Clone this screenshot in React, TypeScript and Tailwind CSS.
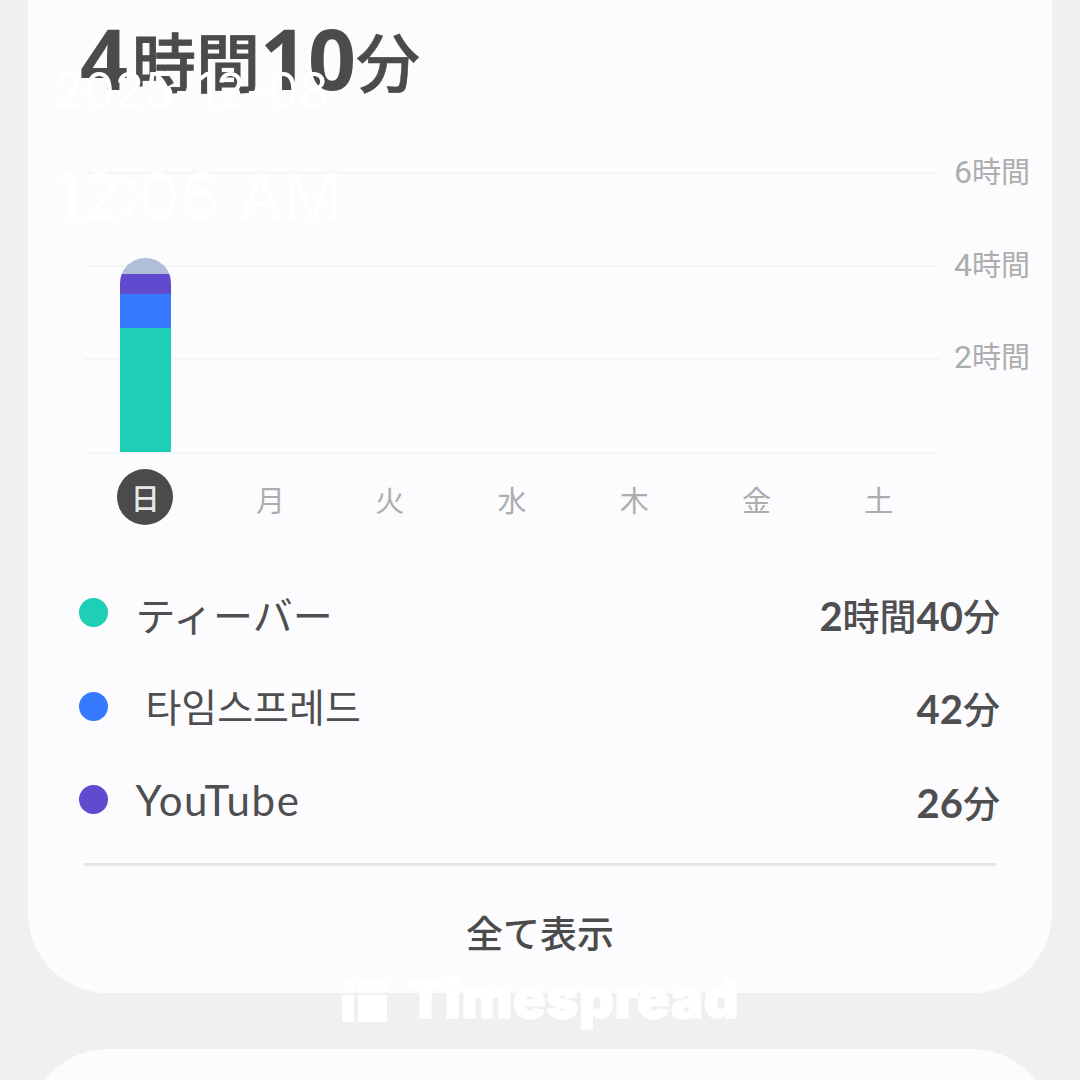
interface Usage {
    name: string;
    nameStyle: string;
    time: [string, string][];
    dot: string;
}

const days = ['日', '月', '火', '水', '木', '金', '土'];

const gridRows = ['6', '4', '2'];

// Bar segments from top to bottom
const segments = [
    { color: 'bg-[#b0bfd9]', height: 16 },
    { color: 'bg-[#614acd]', height: 20 },
    { color: 'bg-[#387aff]', height: 34 },
    { color: 'bg-[#1ecfb6]', height: 124 },
];

const usages: Usage[] = [
    {
        name: 'ティーバー',
        nameStyle: 'text-[40px] pt-[7px]',
        time: [
            ['2', '時間'],
            ['40', '分'],
        ],
        dot: 'bg-[#1ecfb6]',
    },
    {
        name: ' 타임스프레드',
        nameStyle: 'text-[39px] pt-[3px]',
        time: [['42', '分']],
        dot: 'bg-[#387aff]',
    },
    {
        name: 'YouTube',
        nameStyle: 'text-[42px] tracking-[1.6px]',
        time: [['26', '分']],
        dot: 'bg-[#614acd]',
    },
];

const TotalTime: React.FC = () => (
    <h1 className="h-[110px] pl-[52px] font-['Open_Sans','Noto_Sans_CJK_JP',sans-serif] text-[84px] leading-[116px] font-bold whitespace-nowrap text-[#4b4b4b]">
        <span>4</span>
        <span className="ml-[4px] align-[3px] text-[64px] leading-[60px] font-medium [-webkit-text-stroke:0.8px_#4b4b4b]">
            時間
        </span>
        <span>10</span>
        <span className="align-[3px] text-[64px] leading-[60px] font-medium [-webkit-text-stroke:0.5px_#4b4b4b]">
            分
        </span>
    </h1>
);

const WeekChart: React.FC = () => (
    <div className="relative mt-[17px] h-[327px]">
        {gridRows.map((hours) => (
            <div key={hours} className="flex h-[92.7px] items-center">
                <div className="ml-14 h-[2px] w-[856px] bg-[#f5f5f7]" />
                <div className="mb-[3px] ml-[14px] flex items-baseline font-['Roboto','Noto_Sans_CJK_JP',sans-serif] text-[#adadaf]">
                    <span className="w-[18px] text-[32px]">{hours}</span>
                    <span className="text-[29px]">時間</span>
                </div>
            </div>
        ))}
        <div className="mt-[47px] ml-14 h-[2px] w-[856px] bg-[#f5f5f7]" />
        <div className="absolute top-[131px] left-[92px] w-[51px] overflow-hidden rounded-t-[25px]">
            {segments.map((s) => (
                <div
                    key={s.color}
                    className={s.color}
                    style={{ height: s.height }}
                />
            ))}
        </div>
    </div>
);

const DayLabels: React.FC = () => (
    <div className="mt-[15px] ml-14 grid h-14 w-[856px] grid-cols-7 font-['Noto_Sans_CJK_JP',sans-serif] text-[29px] leading-none text-[#adadaf]">
        {days.map((day, i) =>
            i === 0 ? (
                <div
                    key={day}
                    className="flex size-14 items-center justify-center justify-self-center rounded-full bg-[#4b4b4b] font-medium text-[#e8e8e8]"
                >
                    {day}
                </div>
            ) : (
                <div
                    key={day}
                    className={`flex items-center justify-center pt-[5px] ${day === '月' ? 'pl-[6px]' : ''}`}
                >
                    {day}
                </div>
            ),
        )}
    </div>
);

const UsageRow: React.FC<{ usage: Usage }> = ({ usage }) => (
    <li className="flex h-[93.5px] items-center pr-[52px] pl-[50.5px] text-[#4f4f51]">
        <span className={`size-[29px] rounded-full ${usage.dot}`} />
        <span
            className={`ml-7 font-['Lato','Noto_Sans_CJK_JP','Noto_Sans_CJK_KR',sans-serif] leading-none whitespace-pre ${usage.nameStyle}`}
        >
            {usage.name}
        </span>
        <span className="ml-auto flex items-baseline pt-[6px] font-['Lato','Noto_Sans_CJK_JP',sans-serif] text-[40px] leading-none font-bold">
            {usage.time.map(([value, unit]) => (
                <span key={unit}>
                    {value}
                    <span className="text-[37px] font-medium">{unit}</span>
                </span>
            ))}
        </span>
    </li>
);

const Timestamp: React.FC = () => (
    <div className="absolute top-[61px] left-[54px] font-['Inter',sans-serif] text-white">
        <p className="text-[49px] leading-[60px] tracking-[-0.2px]">
            2025-12-08
        </p>
        <p className="mt-[36px] text-[65px] leading-[80px]">12:06 AM</p>
    </div>
);

const Watermark: React.FC = () => (
    <div className="absolute top-[969px] left-[342px] flex items-start text-white">
        <svg
            className="mt-[10px]"
            width="45"
            height="43"
            viewBox="0 0 45 43"
            fill="currentColor"
        >
            <circle cx="6" cy="6" r="6" />
            <rect x="16" width="29" height="12" />
            <rect y="16" width="12" height="27" />
            <rect x="16" y="16" width="29" height="27" />
        </svg>
        <span className="ml-5 font-['Inter',sans-serif] text-[54px] leading-[60px] font-black tracking-[0.7px] [-webkit-text-stroke:1.5px_white]">
            Timespread
        </span>
    </div>
);

const App: React.FC = () => {
    return (
        <div className="relative h-[1080px] w-[1080px] overflow-hidden bg-[#f0f0f2]">
            <div className="mx-7 h-[993px] rounded-b-[80px] bg-[#fcfcfe]">
                <TotalTime />
                <WeekChart />
                <DayLabels />
                <ul className="mt-[41px]">
                    {usages.map((u) => (
                        <UsageRow key={u.name} usage={u} />
                    ))}
                </ul>
                <div className="mt-[16.5px] ml-14 h-[3px] w-[912px] bg-[#e6e6e8]" />
                <div className="mt-[46px] text-center font-['Noto_Sans_CJK_JP',sans-serif] text-[37px] leading-[40px] font-medium text-[#4b4b4b]">
                    全て表示
                </div>
            </div>
            <div className="mx-7 mt-14 h-[200px] rounded-t-[80px] bg-[#fcfcfe]" />
            <Timestamp />
            <Watermark />
        </div>
    );
};

export default App;
